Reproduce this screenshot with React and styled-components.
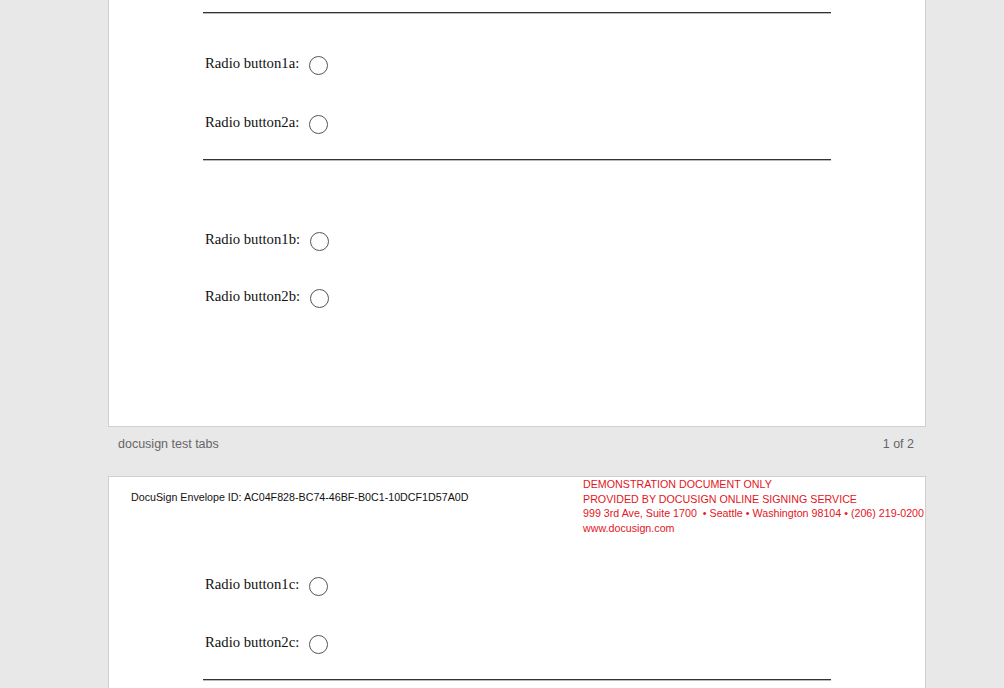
import React from 'react';
import styled, { createGlobalStyle } from 'styled-components';

const GlobalStyle = createGlobalStyle`
  html, body {
    margin: 0;
    padding: 0;
    background: #e8e8e8;
    overflow: hidden;
  }
`;

export const Viewer = styled.div`
  width: 1004px;
  height: 688px;
  overflow: hidden;
  padding-left: 108px;
  box-sizing: border-box;
`;

export const Page = styled.div`
  width: 818px;
  box-sizing: border-box;
  background: #fff;
  border: 1px solid #cfcfcf;
  border-top: ${props => (props.$cut ? 'none' : '1px solid #cfcfcf')};
  height: ${props => props.$height}px;
  overflow: hidden;
`;

export const Rule = styled.div`
  margin: ${props => props.$top || 0}px 0 0 94px;
  width: 628px;
  height: 1px;
  background: #333;
  box-shadow: 0 0.5px 0 #777;
`;

export const Row = styled.div`
  display: flex;
  align-items: center;
  height: 30px;
  margin-top: ${props => props.$top || 0}px;
  padding-left: 96px;
`;

export const Label = styled.span`
  font-family: "Liberation Serif", "Times New Roman", serif;
  font-size: 14.7px;
  color: #111;
  margin-top: -4px;
`;

export const Radio = styled.span`
  display: inline-block;
  width: 17px;
  height: 17px;
  border: 1px solid #555;
  border-radius: 50%;
  margin-left: 10px;
`;

export const Footer = styled.div`
  width: 818px;
  height: 49px;
  box-sizing: border-box;
  display: flex;
  justify-content: space-between;
  padding: 9px 12px 0 10px;
  font-family: "Liberation Sans", Arial, sans-serif;
  font-size: 12.5px;
  line-height: 16px;
  color: #666;
`;

export const Header = styled.div`
  display: grid;
  grid-template-columns: 474px 1fr;
  font-family: "Liberation Sans", Arial, sans-serif;
  font-size: 10.7px;
`;

export const EnvelopeId = styled.div`
  padding: 13px 0 0 22px;
  line-height: 14px;
  color: #111;
`;

export const Demo = styled.div`
  color: #e3151d;
  line-height: 14.6px;
  white-space: nowrap;
`;

const RadioRow = ({ label, top }) => (
  <Row $top={top}>
    <Label>{label}</Label>
    <Radio />
  </Row>
);

export default function App() {
  return (
    <>
      <GlobalStyle />
      <Viewer>
        <Page $cut $height={427}>
          <Rule $top={12} />
          <RadioRow label="Radio button1a:" top={37} />
          <RadioRow label="Radio button2a:" top={29} />
          <Rule $top={20} />
          <RadioRow label="Radio button1b:" top={66} />
          <RadioRow label="Radio button2b:" top={27} />
        </Page>
        <Footer>
          <span>docusign test tabs</span>
          <span>1 of 2</span>
        </Footer>
        <Page $height={240}>
          <Header>
            <EnvelopeId>DocuSign Envelope ID: AC04F828-BC74-46BF-B0C1-10DCF1D57A0D</EnvelopeId>
            <Demo>
              <div>DEMONSTRATION DOCUMENT ONLY</div>
              <div>PROVIDED BY DOCUSIGN ONLINE SIGNING SERVICE</div>
              <div>999 3rd Ave, Suite 1700&nbsp; • Seattle • Washington 98104 • (206) 219-0200</div>
              <div>www.docusign.com</div>
            </Demo>
          </Header>
          <RadioRow label="Radio button1c:" top={36} />
          <RadioRow label="Radio button2c:" top={28} />
          <Rule $top={20} />
        </Page>
      </Viewer>
    </>
  );
}
